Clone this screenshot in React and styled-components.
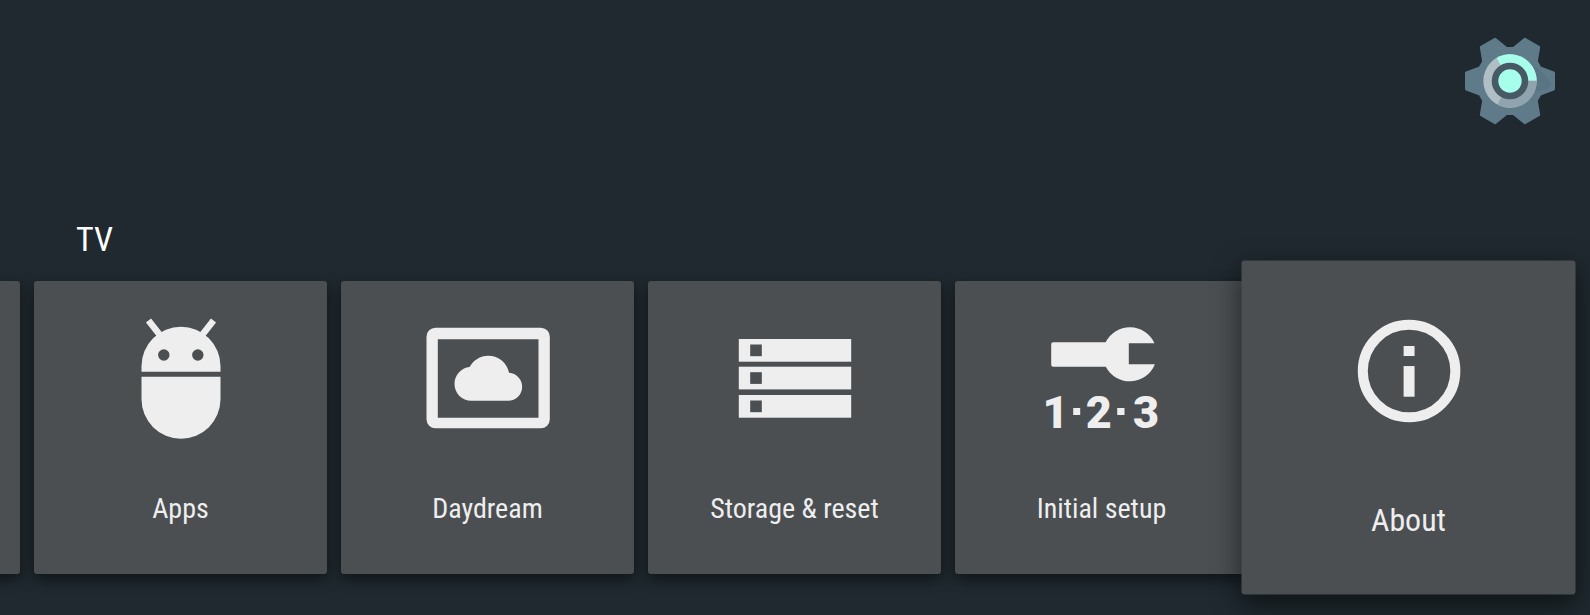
import React from 'react';
import styled, { createGlobalStyle } from 'styled-components';

const GlobalStyle = createGlobalStyle`
  html, body {
    margin: 0;
    padding: 0;
    background: #1f292f;
  }
`

const Screen = styled.div`
  width: 1590px;
  height: 615px;
  overflow: hidden;
  display: flex;
  flex-direction: column;
  background: #1f292f;
  font-family: Roboto, "Liberation Sans", sans-serif;
`

const TopBar = styled.div`
  height: 217px;
  flex: none;
  display: flex;
  justify-content: flex-end;
  align-items: flex-start;
  padding: 31px 30px 0 0;
  box-sizing: border-box;
`

const SectionTitle = styled.div`
  height: 64px;
  flex: none;
  padding-left: 76px;
  font-size: 34px;
  line-height: 44px;
  color: #fff;
  font-stretch: 85%;
`

const Row = styled.div`
  display: flex;
  gap: 14px;
  margin-left: -273px;
`

const Card = styled.div`
  flex: 0 0 293px;
  height: 293px;
  position: relative;
  z-index: ${props => (props.$focused ? 2 : 1)};
  transform: ${props => (props.$focused ? 'scale(1.14)' : 'none')};
  display: flex;
  flex-direction: column;
  align-items: center;
  padding-top: 32px;
  box-sizing: border-box;
  border-radius: 3px;
  background: #4b4f52;
  box-shadow: ${props => (props.$focused
    ? '0 8px 24px rgba(0, 0, 0, 0.55)'
    : '0 5px 14px rgba(0, 0, 0, 0.5)')};
`

const IconSlot = styled.svg`
  width: 130px;
  height: 130px;
  flex: none;
  fill: #eeeeee;
`

const Label = styled.div`
  margin-top: 49px;
  font-size: 28px;
  line-height: 34px;
  color: #eeeeee;
  white-space: nowrap;
  font-stretch: 85%;
`

const AppsIcon = () => (
  <IconSlot viewBox="0 0 130 130">
    <path d="M32.5 7.5 43.5 21.5M97.5 7.5 86.5 21.5" stroke="#eeeeee" strokeWidth="6.5" fill="none" />
    <path d="M25.5 58.7V53.2a39.5 39.5 0 0 1 79 0v5.5z" />
    <path d="M25.5 63.7h79v22.5a39.5 39.5 0 0 1-79 0z" />
    <circle cx="47.8" cy="42" r="5.7" fill="#4b4f52" />
    <circle cx="81.8" cy="42" r="5.7" fill="#4b4f52" />
  </IconSlot>
)

const DaydreamIcon = () => (
  <IconSlot viewBox="0 0 130 130">
    <path
      fillRule="evenodd"
      d="M12.5 14.7h105.3a9 9 0 0 1 9 9v82.6a9 9 0 0 1-9 9H12.5a9 9 0 0 1-9-9V23.7a9 9 0 0 1 9-9zM14.8 26.3v78.4h100.7V26.3z"
    />
    <path
      transform="translate(31.5 31.4) scale(2.82)"
      d="M19.35 10.04C18.67 6.59 15.64 4 12 4 9.11 4 6.6 5.64 5.35 8.04 2.34 8.36 0 10.91 0 14c0 3.31 2.69 6 6 6h13c2.76 0 5-2.24 5-5 0-2.64-2.05-4.78-4.65-4.96z"
    />
  </IconSlot>
)

const StorageIcon = () => (
  <IconSlot viewBox="0 0 130 130">
    {[26, 53.7, 82].map(y => (
      <g key={y}>
        <rect x="8.8" y={y} width="112.4" height="22.7" />
        <rect x="20.2" y={y + 5.5} width="11.6" height="11.7" fill="#4b4f52" />
      </g>
    ))}
  </IconSlot>
)

const SetupDigit = styled.text`
  font-family: Roboto, "Liberation Sans", sans-serif;
  font-weight: 900;
  font-size: 45px;
  text-anchor: middle;
`

const SetupIcon = () => (
  <IconSlot viewBox="0 0 130 130">
    <path d="M16.2 29.3H68.6A27 27 0 0 1 117.46 30.3H91.8V51.3H117.88A27 27 0 0 1 68.8 53.7H16.2a2 2 0 0 1-2-2V31.3a2 2 0 0 1 2-2z" />
    <SetupDigit x="18.5" y="115">1</SetupDigit>
    <rect x="36.2" y="95" width="7" height="7" />
    <SetupDigit x="61.8" y="115">2</SetupDigit>
    <rect x="80.2" y="95" width="7.3" height="7" />
    <SetupDigit x="109" y="115">3</SetupDigit>
  </IconSlot>
)

const AboutIcon = () => (
  <IconSlot viewBox="0 0 130 130">
    <circle cx="65" cy="65" r="40.6" fill="none" stroke="#eeeeee" strokeWidth="8.8" />
    <rect x="60.2" y="43" width="9.6" height="8.8" />
    <rect x="60.2" y="60.6" width="9.6" height="26.9" />
  </IconSlot>
)

// six teeth, one every 60 degrees, starting on the right
function gearPath() {
  const points = []
  for (let k = 0; k < 6; k++) {
    const a = (k * Math.PI) / 3
    const cos = Math.cos(a)
    const sin = Math.sin(a)
    const place = (r, t) => `${(50 + r * cos - t * sin).toFixed(2)} ${(50 + r * sin + t * cos).toFixed(2)}`
    points.push(place(30, -13), place(43.5, -8), place(43.5, 8), place(30, 13))
  }
  return `M${points.join('L')}Z`
}

function sector(from, to, r) {
  const at = deg => {
    const rad = (deg * Math.PI) / 180
    return `${(50 + r * Math.cos(rad)).toFixed(2)} ${(50 + r * Math.sin(rad)).toFixed(2)}`
  }
  const large = to - from > 180 ? 1 : 0
  return `M50 50L${at(from)}A${r} ${r} 0 ${large} 1 ${at(to)}Z`
}

const GearSvg = styled.svg`
  width: 100px;
  height: 100px;
  flex: none;
`

const SettingsGear = () => (
  <GearSvg viewBox="0 0 100 100">
    <path d={gearPath()} fill="#5f7b8a" stroke="#5f7b8a" strokeWidth="3" strokeLinejoin="round" />
    <path d="M69 31 L84 43 L91 52 L88 58 L80 60 L60 60Z" fill="#597482" />
    <circle cx="50" cy="50" r="26.7" fill="#b0bec5" />
    <path d={sector(-1, 118, 26.7)} fill="#90a4ae" />
    <path d={sector(-120, -1, 26.7)} fill="#a7ffeb" />
    <circle cx="50" cy="50" r="18.3" fill="#455a64" />
    <circle cx="50" cy="50" r="11.7" fill="#a7ffeb" />
  </GearSvg>
)

const items = [
  { label: 'Apps', Icon: AppsIcon },
  { label: 'Daydream', Icon: DaydreamIcon },
  { label: 'Storage & reset', Icon: StorageIcon },
  { label: 'Initial setup', Icon: SetupIcon },
  { label: 'About', Icon: AboutIcon, focused: true },
]

function App() {
  return (
    <Screen>
      <GlobalStyle />
      <TopBar>
        <SettingsGear />
      </TopBar>
      <SectionTitle>TV</SectionTitle>
      <Row>
        <Card />
        {items.map(({ label, Icon, focused }) => (
          <Card key={label} $focused={focused}>
            <Icon />
            <Label>{label}</Label>
          </Card>
        ))}
      </Row>
    </Screen>
  )
}

export default App;
